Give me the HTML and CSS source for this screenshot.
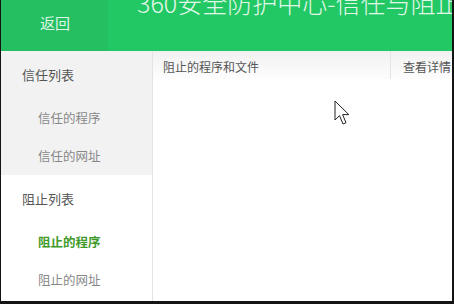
FILE: index.html
```html
<!DOCTYPE html>
<html lang="zh">
<head>
<meta charset="utf-8">
<link rel="stylesheet" href="styles.css">
</head>
<body>
<div class="frame">
  <header class="topbar">
    <div class="back">返回</div>
    <h1 class="title">360安全防护中心-信任与阻止</h1>
  </header>
  <div class="main">
    <nav class="sidebar">
      <div class="group trust">
        <div class="group-title">信任列表</div>
        <div class="item">信任的程序</div>
        <div class="item">信任的网址</div>
      </div>
      <div class="group">
        <div class="group-title">阻止列表</div>
        <div class="item active">阻止的程序</div>
        <div class="item">阻止的网址</div>
      </div>
    </nav>
    <section class="content">
      <div class="thead">
        <div class="th th-name">阻止的程序和文件</div>
        <div class="th th-detail">查看详情</div>
      </div>
    </section>
  </div>
  <svg class="cursor" width="17" height="26" viewBox="0 0 17 26">
    <path d="M1 1 L1 20 L5.5 15.6 L9 24 L12 22.7 L8.6 14.6 L14.8 14.6 Z" fill="#fff" stroke="#222" stroke-width="1" stroke-linejoin="miter"/>
  </svg>
</div>
</body>
</html>
```

FILE: styles.css
```css
* { box-sizing: border-box; margin: 0; padding: 0; }
html, body { width: 454px; height: 304px; overflow: hidden; }
body {
  background: #141414;
  font-family: "Noto Sans CJK SC", "Noto Sans", sans-serif;
}
.frame {
  position: relative;
  margin-left: 1px;
  width: 451px;
  height: 301px;
  background: #fff;
  overflow: hidden;
  display: flex;
  flex-direction: column;
}
.topbar {
  height: 51px;
  flex: none;
  background: #22c864;
  display: flex;
  align-items: flex-start;
  overflow: hidden;
}
.back {
  width: 107px;
  height: 51px;
  flex: none;
  background: #25bf62;
  color: #dff7e7;
  font-size: 15px;
  line-height: 20px;
  padding-top: 13px;
  padding-left: 39px;
}
.title {
  margin-left: 29px;
  margin-top: -12px;
  font-size: 25px;
  line-height: 28px;
  font-weight: 300;
  color: #e2f7ea;
  white-space: nowrap;
}
.main {
  flex: 1;
  display: flex;
}
.sidebar {
  width: 152px;
  flex: none;
  border-right: 1px solid #e3e3e3;
  display: flex;
  flex-direction: column;
}
.group.trust { background: #f2f2f2; }
.group-title {
  height: 48px;
  line-height: 48px;
  padding-left: 21px;
  font-size: 13px;
  color: #555;
}
.item {
  height: 38px;
  line-height: 38px;
  padding-left: 37px;
  font-size: 12.5px;
  color: #888;
}
.item.active {
  color: #3f9a2a;
  font-weight: 700;
}
.content { flex: 1; }
.thead {
  height: 28px;
  display: flex;
  background: linear-gradient(#f1f1f1, #fdfdfd);
}
.th {
  font-size: 12px;
  color: #555;
  line-height: 28px;
  padding-top: 2px;
  white-space: nowrap;
}
.th-name {
  width: 238px;
  padding-left: 10px;
  border-right: 1px solid #e4e4e4;
}
.th-detail { padding-left: 12px; }
.cursor {
  position: absolute;
  left: 333px;
  top: 100px;
}
```
